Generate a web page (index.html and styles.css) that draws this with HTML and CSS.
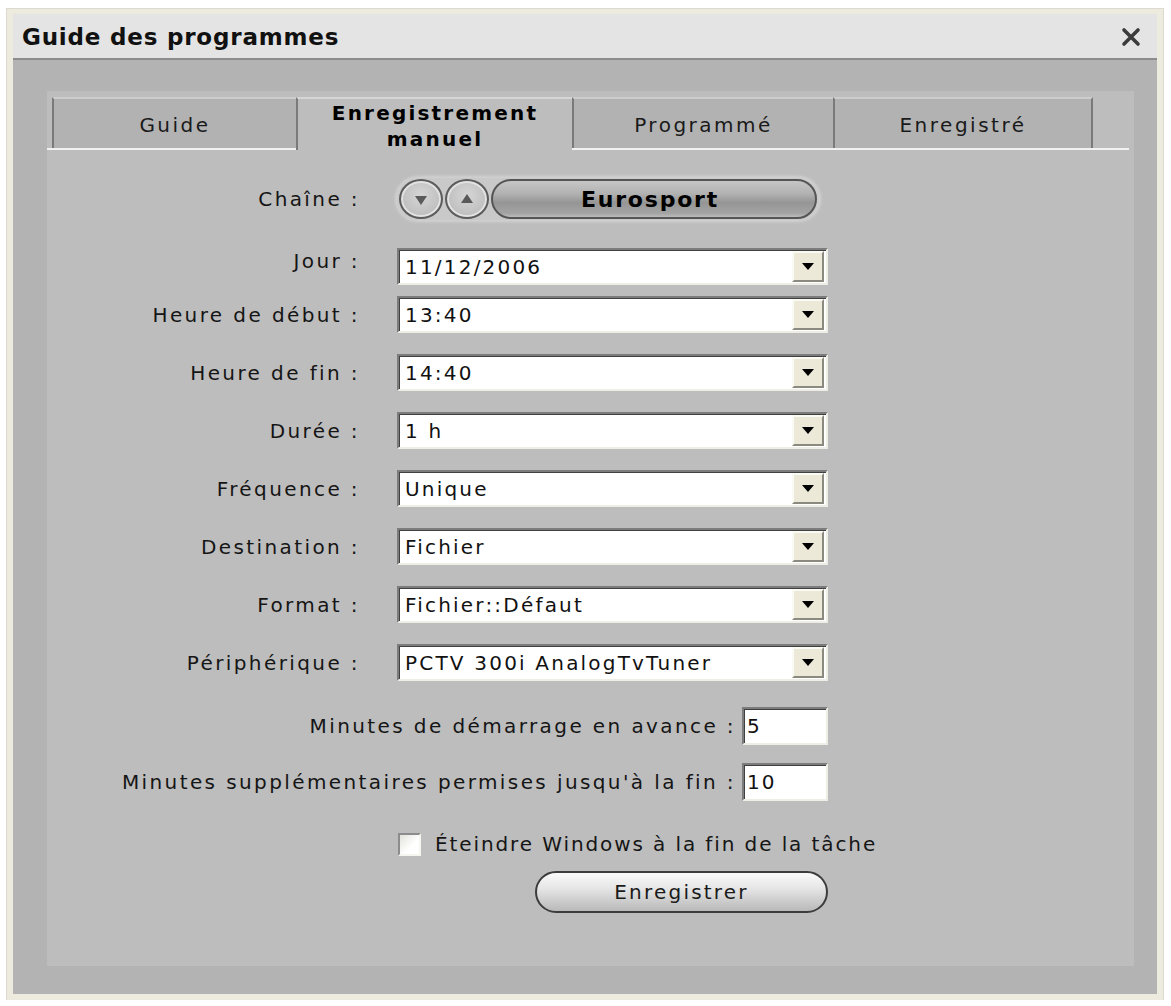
FILE: index.html
```html
<!DOCTYPE html>
<html lang="fr">
<head>
    <meta charset="UTF-8">
    <title>Guide des programmes</title>
    <link rel="stylesheet" href="styles.css">
</head>
<body>
    <div class="window">
        <div class="titlebar">
            <span class="title">Guide des programmes</span>
            <svg class="close" width="20" height="20" viewBox="0 0 20 20">
                <path d="M3 3 L17 17 M17 3 L3 17" stroke="#3c3c3c" stroke-width="3.6" stroke-linecap="round"/>
            </svg>
        </div>

        <div class="frame">
            <div class="panel">
                <div class="tabs">
                    <div class="tab tab-guide">Guide</div>
                    <div class="tab tab-manual active">Enregistrement<br>manuel</div>
                    <div class="tab tab-planned">Programmé</div>
                    <div class="tab tab-done">Enregistré</div>
                </div>

                <div class="form">
                    <div class="field field-channel">
                        <label>Chaîne :</label>
                        <div class="channel">
                            <span class="round-btn"><span class="tri-down"></span></span>
                            <span class="round-btn"><span class="tri-up"></span></span>
                            <span class="channel-name">Eurosport</span>
                        </div>
                    </div>

                    <div class="field field-first">
                        <label class="label-top">Jour :</label>
                        <div class="combo"><span class="combo-value">11/12/2006</span><span class="combo-btn"></span></div>
                    </div>
                    <div class="field field-tight">
                        <label>Heure de début :</label>
                        <div class="combo"><span class="combo-value">13:40</span><span class="combo-btn"></span></div>
                    </div>
                    <div class="field">
                        <label>Heure de fin :</label>
                        <div class="combo"><span class="combo-value">14:40</span><span class="combo-btn"></span></div>
                    </div>
                    <div class="field">
                        <label>Durée :</label>
                        <div class="combo"><span class="combo-value">1 h</span><span class="combo-btn"></span></div>
                    </div>
                    <div class="field">
                        <label>Fréquence :</label>
                        <div class="combo"><span class="combo-value">Unique</span><span class="combo-btn"></span></div>
                    </div>
                    <div class="field">
                        <label>Destination :</label>
                        <div class="combo"><span class="combo-value">Fichier</span><span class="combo-btn"></span></div>
                    </div>
                    <div class="field">
                        <label>Format :</label>
                        <div class="combo"><span class="combo-value">Fichier::Défaut</span><span class="combo-btn"></span></div>
                    </div>
                    <div class="field">
                        <label>Périphérique :</label>
                        <div class="combo"><span class="combo-value">PCTV 300i AnalogTvTuner</span><span class="combo-btn"></span></div>
                    </div>

                    <div class="extra extra-first">
                        <label>Minutes de démarrage en avance :</label>
                        <div class="textbox">5</div>
                    </div>
                    <div class="extra">
                        <label>Minutes supplémentaires permises jusqu'à la fin :</label>
                        <div class="textbox">10</div>
                    </div>

                    <div class="check-row">
                        <span class="checkbox"></span>
                        <span class="check-label">Éteindre Windows à la fin de la tâche</span>
                    </div>

                    <div class="submit-row">
                        <button type="button" class="pill-btn">Enregistrer</button>
                    </div>
                </div>
            </div>
        </div>
    </div>
</body>
</html>
```

FILE: styles.css
```css
* {
    margin: 0;
    padding: 0;
    box-sizing: border-box;
}

body {
    background: #ffffff;
    font-family: "DejaVu Sans", Verdana, sans-serif;
    color: #111;
}

.window {
    width: 1156px;
    height: 991px;
    margin: 9px 0 0 7px;
    border: 6px solid #ecebdd;
    border-top-width: 5px;
    box-shadow: 0 0 0 1px #dcdad0;
    display: flex;
    flex-direction: column;
}

/* title bar */
.titlebar {
    height: 46px;
    background: #e4e4e4;
    border-bottom: 2px solid #8c8c8c;
    display: flex;
    align-items: center;
    justify-content: space-between;
    padding: 2px 16px 0 9px;
}

.title {
    font-size: 23px;
    font-weight: bold;
    letter-spacing: 0.8px;
    color: #111;
}

/* grey frame around the tab panel */
.frame {
    flex: 1;
    background: #b3b3b3;
    padding: 31px 23px 28px 34px;
    display: flex;
}

.panel {
    flex: 1;
    background: #bdbdbd;
}

/* tabs */
.tabs {
    display: flex;
    padding: 6px 0 0 5px;
    margin-right: 5px;
    border-bottom: 2px solid #f2f2f2;
    height: 59px;
}

.tab {
    height: 51px;
    background: #b2b2b2;
    border-top: 2px solid #cdcdcd;
    border-left: 2px solid #7a7a7a;
    display: flex;
    align-items: center;
    justify-content: center;
    padding-top: 3px;
    font-size: 20px;
    letter-spacing: 2.5px;
    color: #1a1a1a;
    text-align: center;
    line-height: 26px;
}

.tab-guide { width: 244px; }
.tab-manual { width: 276px; }
.tab-planned { width: 261px; }
.tab-done {
    width: 260px;
    border-right: 2px solid #7a7a7a;
}

.tab.active {
    background: #bdbdbd;
    border-top-color: #d6d6d6;
    font-weight: bold;
    letter-spacing: 2.2px;
    height: 53px;
    margin-bottom: -2px;
    align-items: flex-start;
    padding-top: 1px;
    color: #000;
}

/* form */
.form {
    width: 781px;
    padding-top: 28px;
    display: flex;
    flex-direction: column;
}

.field {
    display: grid;
    grid-template-columns: 313px 431px;
    column-gap: 37px;
    align-items: center;
    margin-top: 21px;
}

label {
    text-align: right;
    font-size: 20px;
    letter-spacing: 2.4px;
    color: #151515;
    white-space: nowrap;
}

.label-top {
    align-self: start;
    padding-top: 1px;
}

.field-channel {
    margin-top: 0;
}

.field-first {
    margin-top: 28px;
}

.field-tight {
    margin-top: 11px;
}

/* channel selector */
.channel {
    width: 422px;
    height: 42px;
    display: flex;
    align-items: center;
    gap: 2px;
    padding: 0 2px;
    border-radius: 21px;
    background: #c9c9c9;
    box-shadow: 0 0 3px 2px #d2d2d2;
}

.round-btn {
    width: 44px;
    height: 40px;
    flex: none;
    border-radius: 50%;
    border: 2px solid #5c5c5c;
    background: radial-gradient(circle at 50% 40%, #d6d6d6 0%, #c2c2c2 60%, #a9a9a9 100%);
    box-shadow: inset 0 0 0 2px #e2e2e2;
    display: flex;
    align-items: center;
    justify-content: center;
}

.tri-down, .tri-up {
    width: 0;
    height: 0;
    border-left: 6px solid transparent;
    border-right: 6px solid transparent;
}

.tri-down {
    border-top: 9px solid #5a5a5a;
    margin-top: 2px;
}

.tri-up {
    border-bottom: 9px solid #5a5a5a;
    margin-top: -2px;
}

.channel-name {
    flex: 1;
    height: 40px;
    border-radius: 20px;
    border: 2px solid #555;
    background: linear-gradient(#c6c6c6 0%, #b2b2b2 35%, #959595 60%, #a4a4a4 90%, #bcbcbc 100%);
    display: flex;
    align-items: center;
    justify-content: center;
    padding-right: 8px;
    font-size: 22px;
    font-weight: bold;
    letter-spacing: 1.8px;
    color: #000;
}

/* drop-down boxes */
.combo {
    height: 37px;
    background: #fff;
    border: 2px solid;
    border-color: #7c7c7c #eeeee6 #eeeee6 #7c7c7c;
    box-shadow: inset 1px 1px 0 #404040;
    display: flex;
    align-items: center;
    justify-content: space-between;
    padding: 1px 2px 1px 6px;
}

.combo-value {
    font-size: 20px;
    letter-spacing: 2.2px;
    color: #111;
    white-space: nowrap;
}

.combo-btn {
    width: 32px;
    height: 31px;
    flex: none;
    background: #ece9d8;
    border: 2px solid;
    border-color: #fbfbf6 #8a8a80 #8a8a80 #fbfbf6;
    display: flex;
    align-items: center;
    justify-content: center;
}

.combo-btn::after {
    content: "";
    width: 0;
    height: 0;
    border-left: 6px solid transparent;
    border-right: 6px solid transparent;
    border-top: 7px solid #000;
}

/* minute boxes */
.extra {
    display: flex;
    justify-content: flex-end;
    align-items: center;
    gap: 6px;
    margin-top: 18px;
}

.extra-first {
    margin-top: 26px;
}

.textbox {
    width: 86px;
    height: 38px;
    flex: none;
    background: #fff;
    border: 2px solid;
    border-color: #7c7c7c #eeeee6 #eeeee6 #7c7c7c;
    box-shadow: inset 1px 1px 0 #404040;
    font-size: 20px;
    letter-spacing: 2px;
    padding: 5px 0 0 3px;
}

/* shutdown checkbox */
.check-row {
    display: flex;
    align-items: center;
    gap: 14px;
    margin: 31px 0 0 351px;
}

.checkbox {
    width: 23px;
    height: 23px;
    flex: none;
    background: linear-gradient(135deg, #e2e2dc, #ffffff 60%);
    border: 2px solid;
    border-color: #8c8c8c #f6f6f0 #f6f6f0 #8c8c8c;
}

.check-label {
    font-size: 20px;
    letter-spacing: 1.9px;
    color: #151515;
    white-space: nowrap;
}

/* record button */
.submit-row {
    display: flex;
    justify-content: flex-end;
    margin-top: 15px;
}

.pill-btn {
    width: 293px;
    height: 42px;
    border-radius: 21px;
    border: 2px solid #3c3c3c;
    background: linear-gradient(#fafafa 0%, #e6e6e6 40%, #cfcfcf 70%, #b9b9b9 100%);
    font-family: "DejaVu Sans", Verdana, sans-serif;
    font-size: 20px;
    letter-spacing: 2.2px;
    color: #1a1a1a;
}
```
